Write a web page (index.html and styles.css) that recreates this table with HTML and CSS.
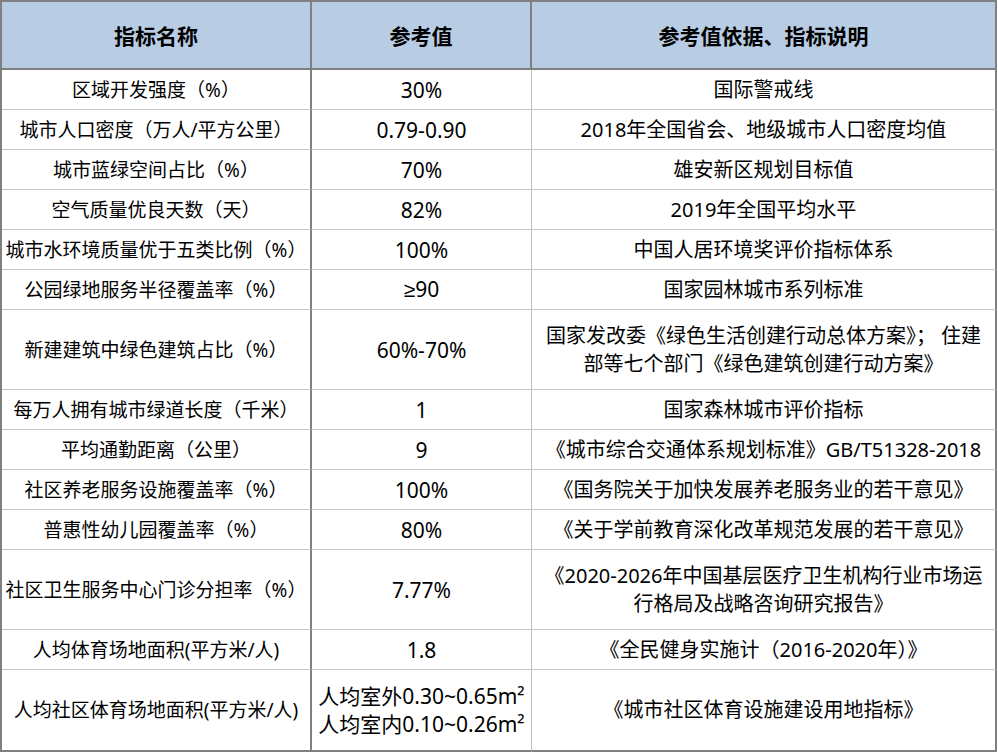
FILE: index.html
```html
<!DOCTYPE html>
<html lang="zh-CN">
<head>
<meta charset="utf-8">
<title>指标</title>
<link rel="stylesheet" href="styles.css">
</head>
<body>
<table class="grid">
  <colgroup>
    <col class="c1"><col class="c2"><col class="c3">
  </colgroup>
  <thead>
    <tr class="head">
      <th class="k">指标名称</th>
      <th class="v">参考值</th>
      <th class="d">参考值依据、指标说明</th>
    </tr>
  </thead>
  <tbody>
    <tr><td class="k">区域开发强度（%）</td><td class="v">30%</td><td class="d">国际警戒线</td></tr>
    <tr><td class="k">城市人口密度（万人/平方公里）</td><td class="v">0.79-0.90</td><td class="d">2018年全国省会、地级城市人口密度均值</td></tr>
    <tr><td class="k">城市蓝绿空间占比（%）</td><td class="v">70%</td><td class="d">雄安新区规划目标值</td></tr>
    <tr><td class="k">空气质量优良天数（天）</td><td class="v">82%</td><td class="d">2019年全国平均水平</td></tr>
    <tr><td class="k">城市水环境质量优于五类比例（%）</td><td class="v">100%</td><td class="d">中国人居环境奖评价指标体系</td></tr>
    <tr><td class="k">公园绿地服务半径覆盖率（%）</td><td class="v"><span class="sym">≥</span>90</td><td class="d">国家园林城市系列标准</td></tr>
    <tr class="tall"><td class="k">新建建筑中绿色建筑占比（%）</td><td class="v">60%-70%</td><td class="d">国家发改委《绿色生活创建行动总体方案》； 住建<br>部等七个部门《绿色建筑创建行动方案》</td></tr>
    <tr><td class="k">每万人拥有城市绿道长度（千米）</td><td class="v">1</td><td class="d">国家森林城市评价指标</td></tr>
    <tr><td class="k">平均通勤距离（公里）</td><td class="v">9</td><td class="d">《城市综合交通体系规划标准》GB/T51328-2018</td></tr>
    <tr><td class="k">社区养老服务设施覆盖率（%）</td><td class="v">100%</td><td class="d">《国务院关于加快发展养老服务业的若干意见》</td></tr>
    <tr><td class="k">普惠性幼儿园覆盖率（%）</td><td class="v">80%</td><td class="d">《关于学前教育深化改革规范发展的若干意见》</td></tr>
    <tr class="tall"><td class="k">社区卫生服务中心门诊分担率（%）</td><td class="v">7.77%</td><td class="d">《2020-2026年中国基层医疗卫生机构行业市场运<br>行格局及战略咨询研究报告》</td></tr>
    <tr><td class="k">人均体育场地面积(平方米/人)</td><td class="v">1.8</td><td class="d">《全民健身实施计（2016-2020年）》</td></tr>
    <tr class="tall last"><td class="k">人均社区体育场地面积(平方米/人)</td><td class="v">人均室外0.30~0.65m²<br>人均室内0.10~0.26m²</td><td class="d">《城市社区体育设施建设用地指标》</td></tr>
  </tbody>
</table>
</body>
</html>
```
FILE: styles.css
```css
html, body {
  margin: 0;
  padding: 0;
  background: #ffffff;
}

.grid {
  border-collapse: separate;
  border-spacing: 0;
  table-layout: fixed;
  width: 997px;
  border-top: 2px solid #808080;
  border-left: 2px solid #808080;
  font-family: "Noto Sans", "Noto Sans CJK SC", sans-serif;
  font-size: 19px;
  color: #000000;
}

.c1 { width: 310px; }
.c2 { width: 220px; }
.c3 { width: 465px; }

.grid th,
.grid td {
  box-sizing: border-box;
  padding: 0 2px;
  text-align: center;
  vertical-align: middle;
  line-height: 28px;
  white-space: nowrap;
}

.head th {
  height: 68px;
  background: #b8cce4;
  font-family: "Noto Sans CJK SC", sans-serif;
  font-weight: 700;
  font-size: 21px;
  color: #000000;
  border-bottom: 2px solid #808080;
  border-right: 2px solid #808080;
}

.grid td {
  height: 40px;
  border-bottom: 1px solid #c6c6c6;
}

.grid td.k {
  border-right: 2px solid #808080;
}

.grid td.v {
  font-size: 21px;
  border-right: 1px solid #c0c0c0;
}

.grid td.d {
  font-size: 20px;
  border-right: 2px solid #808080;
}

.sym {
  font-family: "Liberation Sans", sans-serif;
}

.grid tr.tall td {
  height: 80px;
}

.grid tr.last td {
  height: 82px;
  border-bottom: 2px solid #808080;
}
```
